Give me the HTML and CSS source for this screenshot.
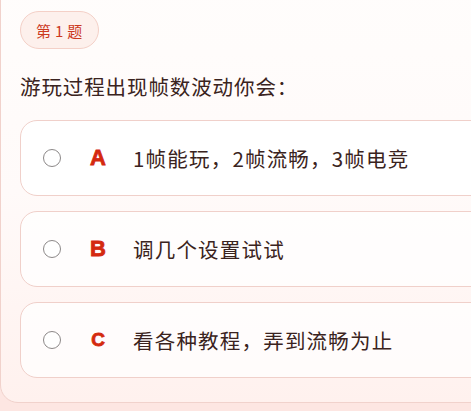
FILE: index.html
```html
<!DOCTYPE html>
<html lang="zh">
<head>
<meta charset="utf-8">
<link rel="stylesheet" href="styles.css">
</head>
<body>
<div class="card">
  <div class="badge">第 1 题</div>
  <div class="question">游玩过程出现帧数波动你会：</div>
  <div class="options">
    <div class="option first">
      <span class="radio"></span>
      <span class="letter">A</span>
      <span class="text">1帧能玩，2帧流畅，3帧电竞</span>
    </div>
    <div class="option">
      <span class="radio"></span>
      <span class="letter">B</span>
      <span class="text">调几个设置试试</span>
    </div>
    <div class="option">
      <span class="radio"></span>
      <span class="letter letter-c">C</span>
      <span class="text">看各种教程，弄到流畅为止</span>
    </div>
  </div>
</div>
</body>
</html>
```
FILE: styles.css
```css
html, body {
  margin: 0;
  padding: 0;
}
body {
  background: #fde6e2;
  font-family: "Noto Sans CJK SC", "Noto Sans", sans-serif;
  color: #3a2320;
  overflow: hidden;
  height: 411px;
}
.card {
  margin-top: -20px;
  width: calc(100% + 60px);
  box-sizing: border-box;
  border: 1px solid #f1d2cc;
  border-radius: 18px;
  background: linear-gradient(180deg, #fffdfc 0%, #fffaf9 50%, #fff1ee 100%);
  padding: 30px 0 24px 19px;
}
.badge {
  display: inline-flex;
  align-items: center;
  height: 36px;
  padding: 0 15px;
  border: 1px solid #f4d0c7;
  border-radius: 19px;
  background: #fdf0ec;
  color: #cc3a1e;
  font-size: 15px;
  letter-spacing: 0.3px;
}
.question {
  margin-top: 23px;
  font-size: 20.5px;
  line-height: 28px;
  letter-spacing: 0.9px;
  color: #3a2320;
}
.options {
  margin-top: 20px;
  display: flex;
  flex-direction: column;
  gap: 15px;
}
.option {
  height: 76px;
  box-sizing: border-box;
  border: 1px solid #f0d0ca;
  border-radius: 17px;
  background: rgba(255, 255, 255, 0.75);
  display: flex;
  align-items: center;
  padding-left: 22px;
}
.option.first {
  background: #ffffff;
}
.radio {
  width: 18px;
  height: 18px;
  box-sizing: border-box;
  border: 1.5px solid #8c8888;
  border-radius: 50%;
  background: #fff;
  flex: none;
}
.letter {
  width: 18px;
  margin-left: 28px;
  text-align: center;
  font-family: "Liberation Sans", "DejaVu Sans", sans-serif;
  font-weight: 900;
  font-size: 22px;
  color: #d4290f;
  flex: none;
  -webkit-text-stroke: 0.8px #d4290f;
}
.letter-c {
  font-size: 19px;
}
.text {
  margin-left: 26px;
  font-size: 20.5px;
  letter-spacing: 1.2px;
  color: #3a2320;
  white-space: nowrap;
}
```
